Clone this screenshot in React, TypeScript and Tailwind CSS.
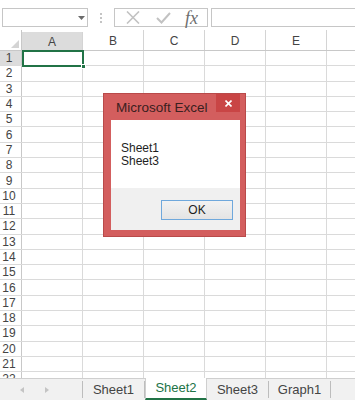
import React from 'react';

const cols = ['A', 'B', 'C', 'D', 'E'];
const rows = Array.from({ length: 22 }, (_, i) => i + 1);

function Toolbar() {
  return (
    <div className="relative h-[30px] flex items-start pt-[8px]">
      <div className="ml-[2px] w-[86px] h-[19px] border border-[#c6c6c6] bg-white relative">
        <svg className="absolute left-[75px] top-[7px]" width="7" height="4" viewBox="0 0 7 4">
          <path d="M0 0 L7 0 L3.5 4 Z" fill="#6b6b6b" />
        </svg>
      </div>
      <div className="w-[26px] flex flex-col items-center gap-[2px] pt-[5px]">
        <span className="w-[2px] h-[2px] bg-[#c4c4c4]" />
        <span className="w-[2px] h-[2px] bg-[#c4c4c4]" />
        <span className="w-[2px] h-[2px] bg-[#c4c4c4]" />
      </div>
      <div className="w-[94px] h-[19px] border border-[#c6c6c6] bg-white flex items-center">
        <svg className="ml-[11px]" width="14" height="13" viewBox="0 0 14 13">
          <path d="M1 0.5 L13 12.5 M13 0.5 L1 12.5" stroke="#c2c2c2" strokeWidth="1.6" />
        </svg>
        <svg className="ml-[16px]" width="15" height="12" viewBox="0 0 15 12">
          <path d="M1 6 L5.5 10.5 L14 1" fill="none" stroke="#c2c2c2" strokeWidth="2" />
        </svg>
        <span className="ml-[14px] text-[18px] leading-[16px] italic text-[#6e6e6e] font-['Liberation_Serif',serif]">
          fx
        </span>
      </div>
      <div className="ml-[3px] flex-1 h-[19px] border border-[#c6c6c6] bg-white -mr-[4px]" />
    </div>
  );
}

function Grid() {
  return (
    <div className="flex flex-col text-[12px] text-[#444] font-['Liberation_Sans',sans-serif]">
      <div className="flex h-[21px] border-b border-[#c8c8c8]">
        <div className="w-[22px] shrink-0 border-r border-[#c8c8c8] relative">
          <svg className="absolute right-[2px] bottom-[2px]" width="8" height="8" viewBox="0 0 8 8">
            <path d="M8 0 L8 8 L0 8 Z" fill="#d4d4d4" />
          </svg>
        </div>
        {cols.map((c) => (
          <div
            key={c}
            className={`w-[61px] shrink-0 border-r border-[#d4d4d4] flex items-center justify-center pt-[1px] ${
              c === 'A' ? 'bg-[#dcdcdc] mt-[2px]' : ''
            }`}
          >
            {c}
          </div>
        ))}
        <div className="flex-1" />
      </div>
      {rows.map((r) => (
        <div key={r} className="flex h-[15.3px] border-b border-[#dadada] shrink-0">
          <div
            className={`w-[22px] shrink-0 border-r border-[#c8c8c8] flex items-center justify-center pr-[3px] leading-[12px] ${
              r === 1 ? 'bg-[#dcdcdc]' : ''
            }`}
          >
            {r}
          </div>
          {cols.map((c) => (
            <div key={c} className="w-[61px] shrink-0 border-r border-[#dadada]" />
          ))}
          <div className="flex-1" />
        </div>
      ))}
    </div>
  );
}

function Tabs() {
  const tabs = ['Sheet1', 'Sheet2', 'Sheet3', 'Graph1'];
  return (
    <div className="absolute left-0 right-0 bottom-0 h-[22px] bg-[#f1f1f1] border-t border-[#cfcfcf] flex items-stretch text-[13px] font-['Liberation_Sans',sans-serif]">
      <div className="w-[83px] shrink-0 flex items-center border-r border-[#bdbdbd] my-[2px]">
        <svg className="ml-[20px]" width="4" height="6" viewBox="0 0 4 6">
          <path d="M4 0 L0 3 L4 6 Z" fill="#c4c4c4" />
        </svg>
        <svg className="ml-[21px]" width="4" height="6" viewBox="0 0 4 6">
          <path d="M0 0 L4 3 L0 6 Z" fill="#c4c4c4" />
        </svg>
      </div>
      {tabs.map((t) => {
        const active = t === 'Sheet2';
        return (
          <div
            key={t}
            className={`w-[62px] shrink-0 flex items-center justify-center ${
              active
                ? 'bg-white text-[#217346] border-b-2 border-[#217346] -mt-[1px] border-x border-x-[#cfcfcf]'
                : 'text-[#444] my-[2px] border-r border-[#bdbdbd]'
            }`}
          >
            {t}
          </div>
        );
      })}
    </div>
  );
}

function Dialog() {
  return (
    <div className="absolute left-[103px] top-[93px] w-[143px] h-[144px] bg-[#d35e5e] border border-[#b94a4a] flex flex-col">
      <div className="h-[26px] flex items-start relative">
        <span className="ml-[12px] mt-[6px] text-[13.5px] leading-[15px] text-[#3a2020] font-['Liberation_Sans',sans-serif]">
          Microsoft Excel
        </span>
        <div className="absolute right-[5px] top-0 w-[24px] h-[18px] bg-[#c94545] flex items-center justify-center">
          <svg width="7" height="7" viewBox="0 0 7 7">
            <path d="M0.5 0.5 L6.5 6.5 M6.5 0.5 L0.5 6.5" stroke="#fff" strokeWidth="1.6" />
          </svg>
        </div>
      </div>
      <div className="ml-[7px] mr-[5px] mb-[6px] flex-1 flex flex-col">
        <div className="h-[68px] bg-white pl-[10px] pt-[22px] text-[12px] leading-[13px] text-[#1e1e1e] font-['Liberation_Sans',sans-serif]">
          <div>Sheet1</div>
          <div>Sheet3</div>
        </div>
        <div className="flex-1 bg-[#f0f0f0] flex justify-end items-start pt-[12px] pr-[7px]">
          <div className="w-[72px] h-[20px] border border-[#6fa8dc] bg-gradient-to-b from-[#f2f2f2] to-[#e4e4e4] flex items-center justify-center text-[12px] text-[#1e1e1e] font-['Liberation_Sans',sans-serif]">
            OK
          </div>
        </div>
      </div>
    </div>
  );
}

export default function App() {
  return (
    <div className="relative w-[355px] h-[400px] overflow-hidden bg-white">
      <Toolbar />
      <div className="h-[348px] overflow-hidden">
        <Grid />
      </div>
      <Tabs />
      <div className="absolute left-[22px] top-[50px] w-[62px] h-[17px] border-2 border-[#217346]">
        <div className="absolute -right-[4px] -bottom-[4px] w-[5px] h-[5px] bg-[#217346] border border-white" />
      </div>
      <Dialog />
    </div>
  );
}
